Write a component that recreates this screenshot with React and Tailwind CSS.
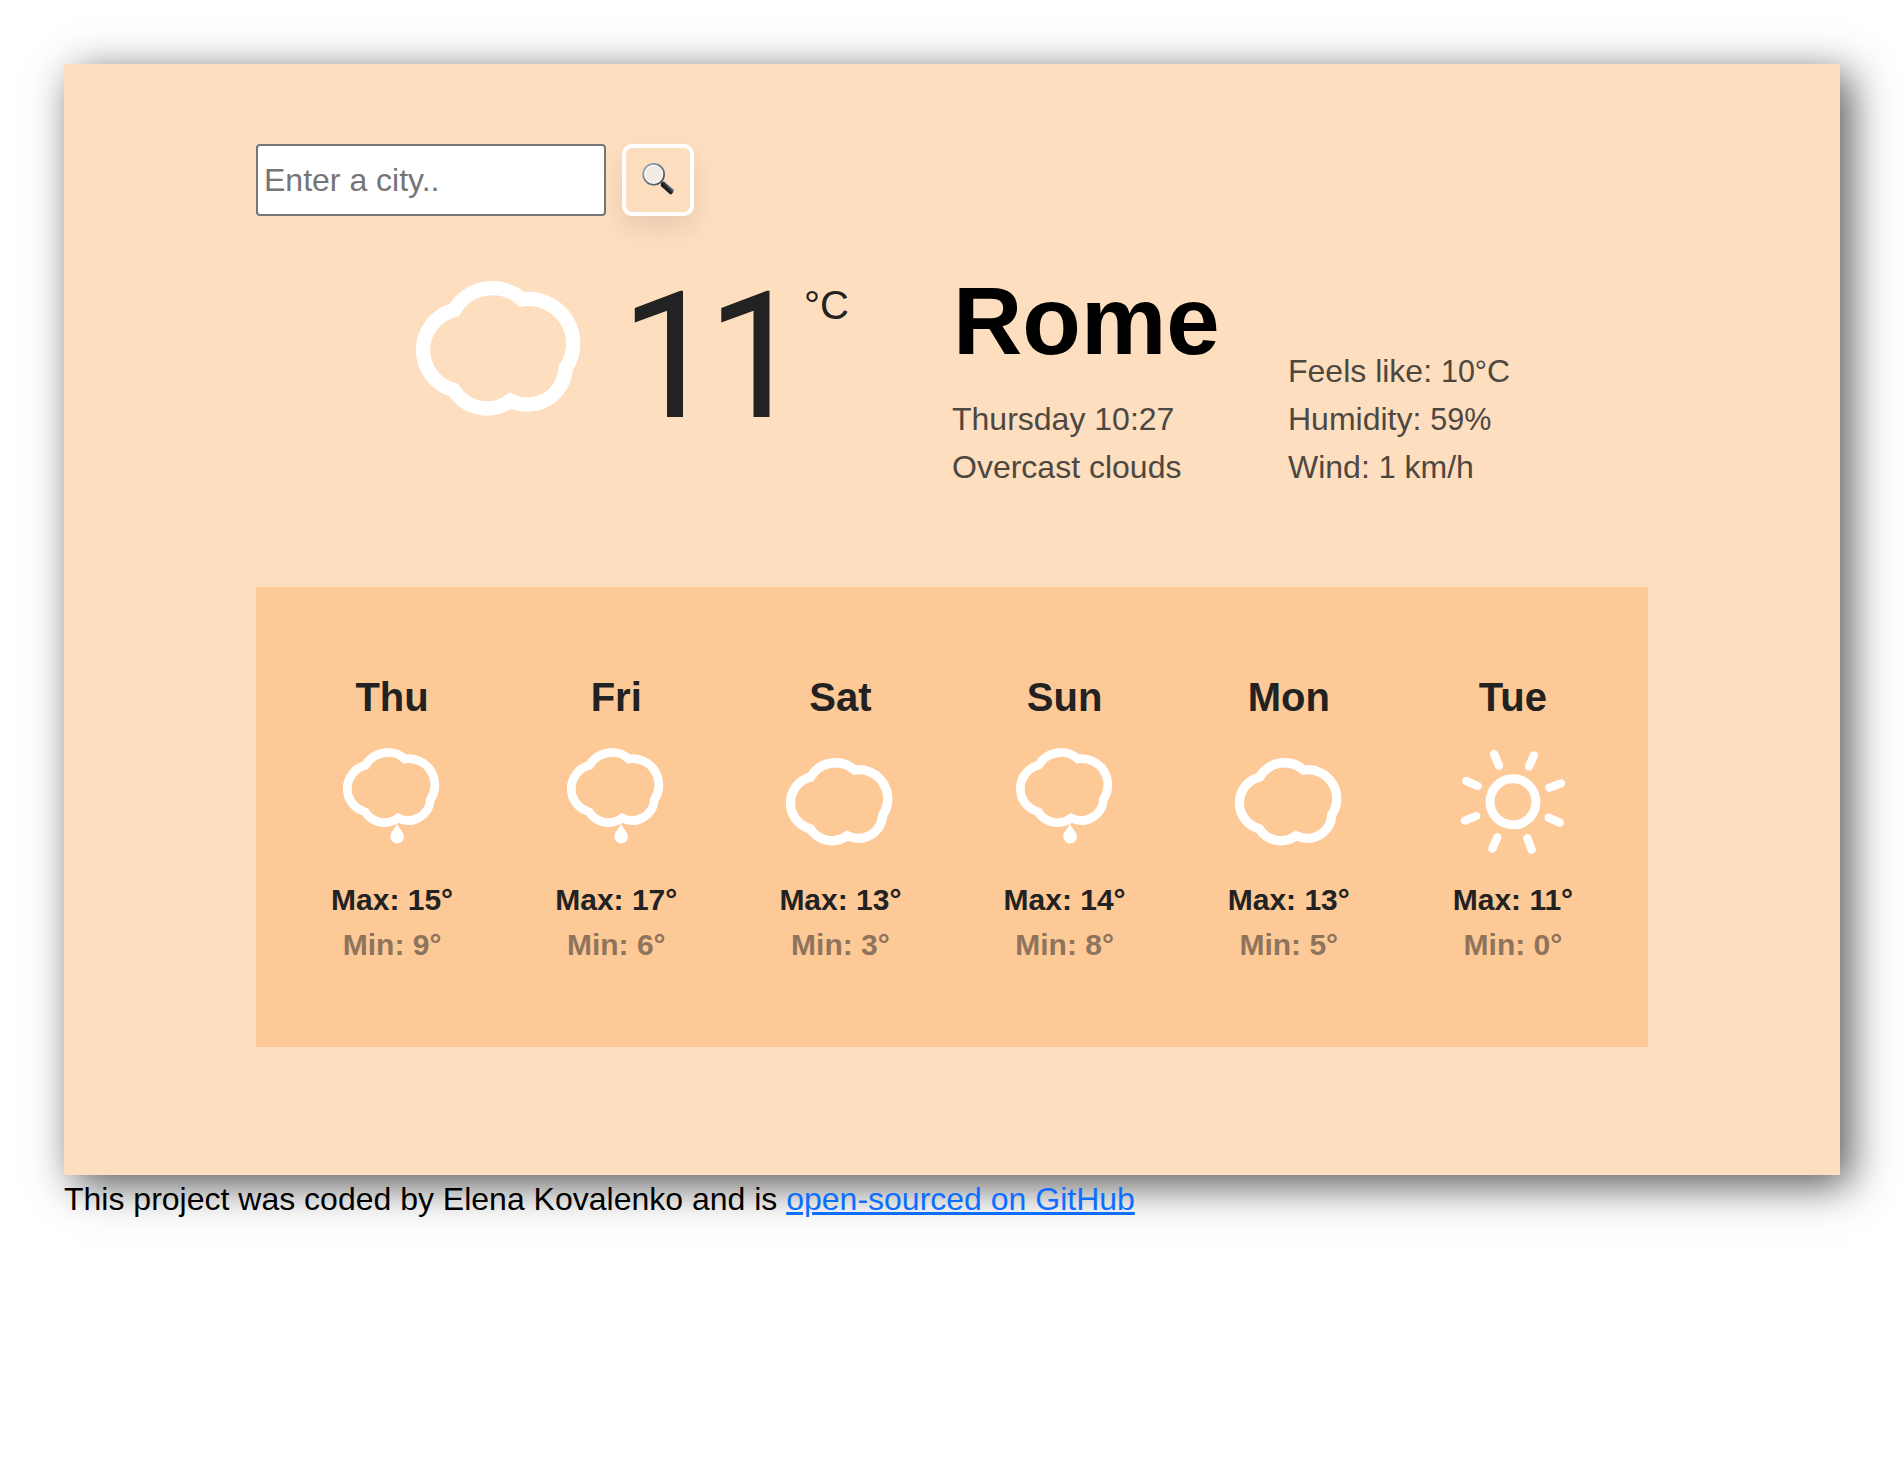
const CLOUD =
  "M193 150A133 133 0 0 1 396 118A134 134 0 0 1 527 325A115 115 0 0 1 361 422A118 118 0 0 1 191 390A124 124 0 0 1 193 150Z";

function MainCloud() {
  return (
    <svg className="h-[150px] w-[180px]" viewBox="54 42 540 450" fill="none" stroke="#fff" strokeWidth="43">
      <path d={CLOUD} />
    </svg>
  );
}

function CloudIcon() {
  return (
    <svg className="h-28 w-28" viewBox="75 258 336 336" fill="none" stroke="#fff">
      <g transform="translate(80 294.500) scale(0.648) translate(-77 -63)" strokeWidth="43">
        <path d={CLOUD} />
      </g>
    </svg>
  );
}

function RainIcon() {
  return (
    <svg className="h-28 w-28" viewBox="48 258 336 336" fill="none" stroke="#fff">
      <g transform="translate(69 265) scale(0.583) translate(-77 -63)" strokeWidth="45">
        <path d={CLOUD} />
      </g>
      <path d="M231 491C236 504 252 516 252 530A20.500 20.500 0 0 1 211 530C211 516 226 504 231 491Z" fill="#fff" stroke="none" />
    </svg>
  );
}

function SunIcon() {
  return (
    <svg className="h-28 w-28" viewBox="771 258 336 336" fill="none" stroke="#fff" strokeLinecap="round">
      <circle cx="939" cy="425.500" r="69" strokeWidth="27" />
      <path
        strokeWidth="25"
        d="M882 282L897 317M1002 286L987 319M1083 370L1048 383M1079 488L1046 473M995 569L982 535M877 566L892 532M795 482L829 468M799 363L833 378"
      />
    </svg>
  );
}

function Magnifier() {
  return (
    <svg className="h-8 w-8 overflow-visible" viewBox="0 0 32 32">
      <defs>
        <linearGradient id="rim" x1="0" y1="0" x2="1" y2="1">
          <stop offset="0" stopColor="#8fb0c4" />
          <stop offset="1" stopColor="#3f464c" />
        </linearGradient>
        <linearGradient id="grip" x1="0" y1="1" x2="1" y2="0">
          <stop offset="0" stopColor="#0c0f12" />
          <stop offset="0.500" stopColor="#1c2125" />
          <stop offset="0.650" stopColor="#59636b" />
          <stop offset="0.850" stopColor="#15191c" />
        </linearGradient>
      </defs>
      <path d="M18.500 17.500L22 20.500" stroke="#7d8489" strokeWidth="2.600" />
      <path d="M21.800 17.300L31.300 25.500Q32.400 28.500 28.500 30.800L18.800 22Q18.400 18.300 21.800 17.300Z" fill="url(#grip)" />
      <circle cx="11.700" cy="10.300" r="10.400" fill="#f3ebe5" stroke="url(#rim)" strokeWidth="1.800" />
      <circle cx="11.700" cy="10.300" r="9" fill="none" stroke="#fff" strokeWidth="0.900" />
    </svg>
  );
}

const days = [
  { day: "Thu", Icon: RainIcon, max: 15, min: 9 },
  { day: "Fri", Icon: RainIcon, max: 17, min: 6 },
  { day: "Sat", Icon: CloudIcon, max: 13, min: 3 },
  { day: "Sun", Icon: RainIcon, max: 14, min: 8 },
  { day: "Mon", Icon: CloudIcon, max: 13, min: 5 },
  { day: "Tue", Icon: SunIcon, max: 11, min: 0 },
];

export default function App() {
  return (
    <div className="min-h-[1474px] bg-white px-16 pt-16 font-['Liberation_Sans',Arial,sans-serif] text-[32px] leading-[48px] text-[#222]">
      <main className="h-[1111px] bg-[#fddebe] px-48 pt-20 shadow-[10px_10px_40px_#555]">
        <form className="flex gap-4" onSubmit={(e) => e.preventDefault()}>
          <input
            type="text"
            placeholder="Enter a city.."
            className="h-[72px] w-[350px] rounded-[4px] border-2 border-[#767676] bg-white px-1.5 placeholder:text-[#757575]"
          />
          <button
            type="submit"
            aria-label="Search"
            className="flex size-[72px] items-center justify-center rounded-[10px] border-4 border-white shadow-[0_12px_24px_rgba(45,35,66,0.1)]"
          >
            <Magnifier />
          </button>
        </form>

        <section className="mt-[47px] flex h-[324px]">
          <div className="flex w-[696px] items-start pl-[152px]">
            <div className="pt-[11px]">
              <MainCloud />
            </div>
            <div className="ml-8 mt-[5px] w-[174px] whitespace-nowrap font-[Roboto,sans-serif] text-[177px] leading-[178px] tracking-[-13px]">
              11
            </div>
            <div className="ml-2.5 mt-[18px] text-[40px]">°C</div>
          </div>
          <div className="w-[336px]">
            <h1 className="mb-[17px] pl-px text-[96px] font-bold leading-[115px] text-black">Rome</h1>
            <ul className="opacity-80">
              <li>Thursday 10:27</li>
              <li>Overcast clouds</li>
            </ul>
          </div>
          <ul className="pt-[84px] opacity-80">
            <li>
              Feels like: <span className="text-[30.5px] leading-none">10°</span>C
            </li>
            <li>
              Humidity: <span className="text-[30.5px] leading-none">59%</span>
            </li>
            <li>
              Wind: <span className="text-[30.5px] leading-none">1</span> km/h
            </li>
          </ul>
        </section>

        <section className="grid h-[460px] grid-cols-6 bg-[#fdc997] pl-6 pr-[23px] pt-[86px] text-center font-bold">
          {days.map(({ day, Icon, max, min }) => (
            <div key={day} className="flex flex-col items-center">
              <h2 className="mb-[25px] text-[40px] leading-[48px]">{day}</h2>
              <Icon />
              <div className="mt-[19px] text-[30px] leading-[45px]">Max: {max}°</div>
              <div className="text-[30px] leading-[45px] opacity-50">Min: {min}°</div>
            </div>
          ))}
        </section>
      </main>
      <footer className="text-black">
        This project was coded by Elena Kovalenko and is{" "}
        <a href="#" className="text-[#0d6efd] underline">
          open-sourced on GitHub
        </a>
      </footer>
    </div>
  );
}
